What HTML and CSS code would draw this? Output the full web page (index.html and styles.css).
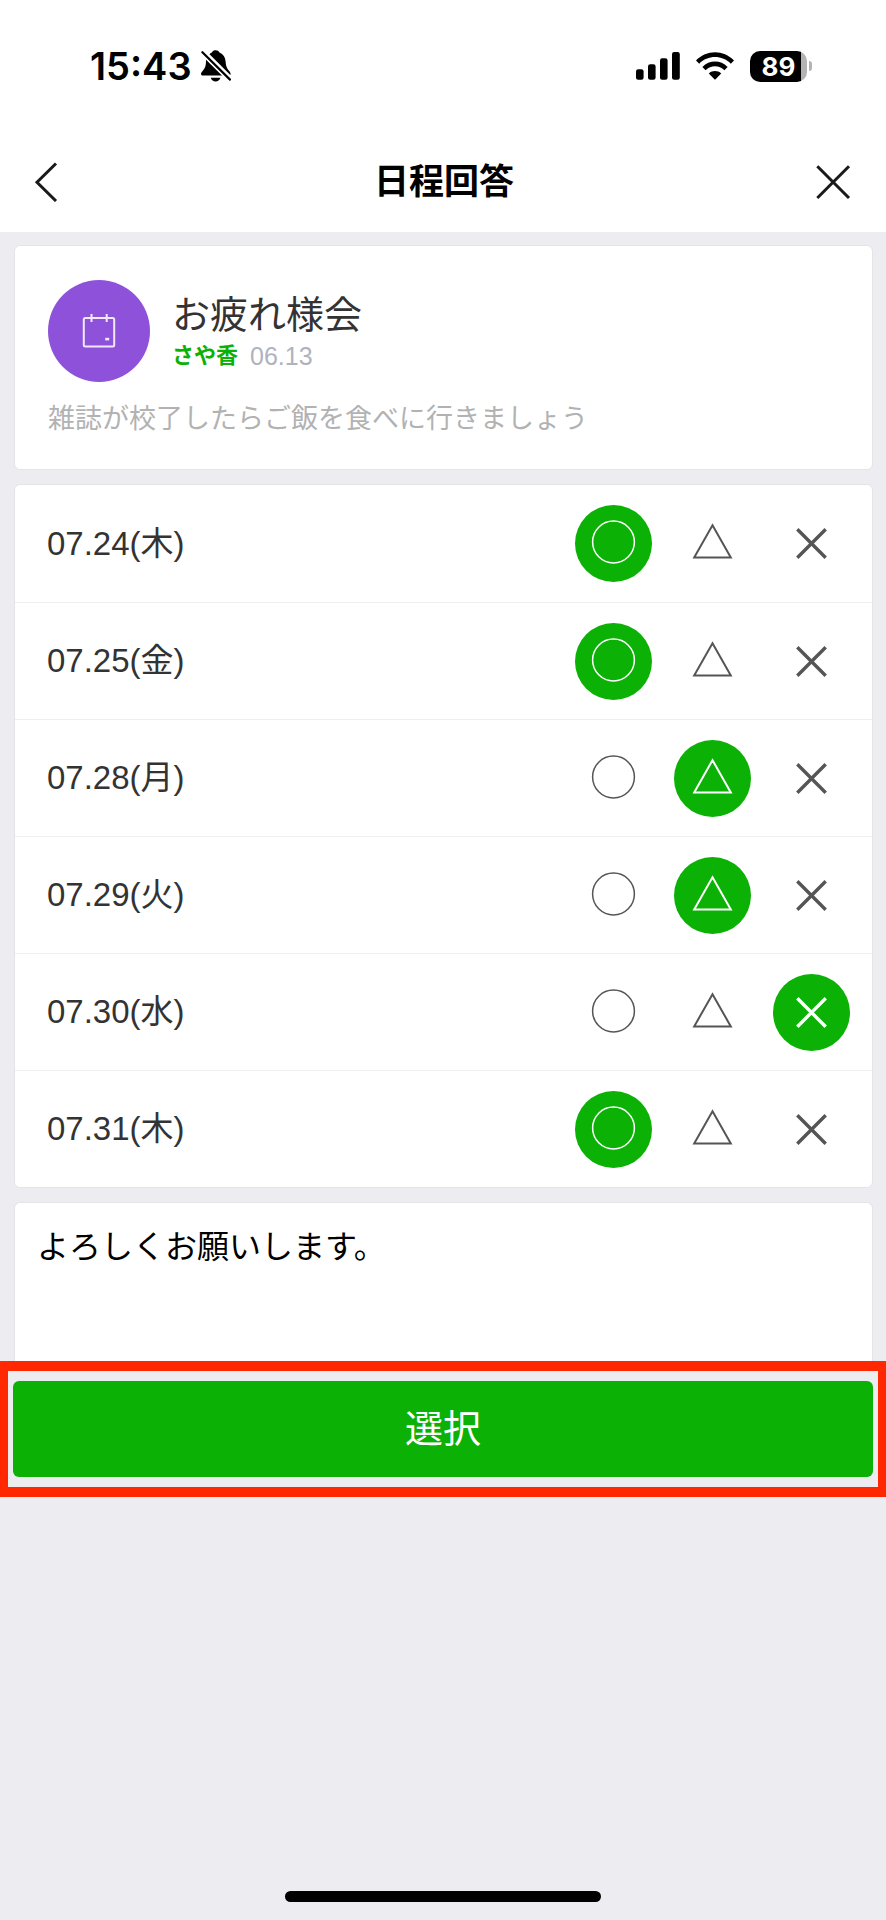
FILE: index.html
```html
<!doctype html>
<html lang="ja">
    <head>
        <meta charset="UTF-8" />
        <meta name="viewport" content="width=device-width, initial-scale=1.0" />
        <title>日程回答</title>
        <link rel="stylesheet" href="styles.css">
    </head>
    <body>
        <svg class="sprite" aria-hidden="true">
            <symbol id="maru" viewBox="0 0 77 77">
                <circle cx="38.5" cy="37" r="20.9" fill="none" stroke="currentColor" stroke-width="1.5" />
            </symbol>
            <symbol id="sankaku" viewBox="0 0 77 77">
                <path d="M38.5 20.2 L56.8 52.4 H20.2 Z" fill="none" stroke="currentColor" stroke-width="2" />
            </symbol>
            <symbol id="batsu" viewBox="0 0 77 77">
                <path d="M24.3 24.3 L52.7 52.7 M52.7 24.3 L24.3 52.7" stroke="currentColor" stroke-width="3.4" />
            </symbol>
        </svg>

        <div class="status-bar">
            <div class="status-left">
                <span class="clock">15:43</span>
                <svg width="30" height="32" viewBox="0 0 30 32">
                    <path d="M8.5 4.2 C9.5 3.3 10.2 3 10.9 2.6 C11.6 .9 13 .3 14.7 .3 C16.4 .3 17.7 1 18.5 2.6 C22.3 4.2 24.3 7.4 24.6 11.5 C24.8 15 25.3 17 26.8 19.2 C28 20.8 29.6 22.2 29.6 24 C29.6 24.4 29.5 24.7 29.3 25 Z" />
                    <path d="M5.3 7.3 L22.6 25.4 H1.8 C.6 25.4 0 24.7 0 23.9 C0 22.5 1.2 21.4 2.2 20.2 C4.4 17.6 4.9 15.2 5 11.3 C5 9.8 5 8.5 5.3 7.3 Z" />
                    <path d="M9.8 27.8 H19.4 C18.6 30.3 16.8 31.6 14.6 31.6 C12.4 31.6 10.5 30.3 9.8 27.8 Z" />
                    <path d="M1.4 2.2 L29 29.6" stroke="#fff" stroke-width="5.6" />
                    <path d="M1.4 2.2 L29 29.6" stroke="#000" stroke-width="2.2" stroke-linecap="round" />
                </svg>
            </div>
            <div class="status-right">
                <svg width="44" height="28" viewBox="0 0 44 28">
                    <rect x="0" y="17.2" width="7.6" height="10.6" rx="2.2" />
                    <rect x="12" y="12.2" width="7.6" height="15.6" rx="2.2" />
                    <rect x="24" y="6.2" width="7.6" height="21.6" rx="2.2" />
                    <rect x="36" y="0" width="7.8" height="27.8" rx="2.2" />
                </svg>
                <svg width="38" height="28" viewBox="0 0 38 28">
                    <path d="M0 8.4 C10.5 -2.6 27.5 -2.6 38 8.4 L34.8 11.7 C26.2 2.8 11.8 2.8 3.2 11.7 Z" />
                    <path d="M6.4 15 C13.4 7.7 24.6 7.7 31.6 15 L28.4 18.2 C23.2 13 14.8 13 9.6 18.2 Z" />
                    <path d="M12.8 21.4 C16.3 18.2 21.7 18.2 25.2 21.4 L19.6 27.2 Q19 27.8 18.4 27.2 Z" />
                </svg>
                <div class="battery"><span class="battery-level">89</span></div>
            </div>
        </div>

        <header class="nav">
            <button type="button" class="nav-btn" aria-label="戻る">
                <svg width="40" height="40" viewBox="0 0 40 40">
                    <path d="M23 1.5 L4 20.3 L23 39" />
                </svg>
            </button>
            <h1>日程回答</h1>
            <button type="button" class="nav-btn" aria-label="閉じる">
                <svg width="36" height="36" viewBox="0 0 36 36">
                    <path d="M2.3 2.3 L34 34 M34 2.3 L2.3 34" />
                </svg>
            </button>
        </header>

        <form class="answer-form">
            <main>
                <section class="card event">
                    <div class="event-head">
                        <div class="event-icon">
                            <svg width="34" height="34" viewBox="0 0 34 34">
                                <rect x="1.8" y="4" width="30.4" height="28.4" rx="1.5" />
                                <path d="M9.5 0 V8 M24.7 0 V8" />
                                <rect x="24.2" y="24.8" width="2" height=".6" />
                            </svg>
                        </div>
                        <div>
                            <h2>お疲れ様会</h2>
                            <p class="meta"><b>さや香</b><time>06.13</time></p>
                        </div>
                    </div>
                    <p class="description">雑誌が校了したらご飯を食べに行きましょう</p>
                </section>

                <section class="card dates">
                    <div class="date-row" role="radiogroup" aria-labelledby="d0724">
                        <span id="d0724">07.24(木)</span>
                        <div class="choices">
                            <label><input type="radio" name="d0724" aria-label="参加" checked><svg><use href="#maru" /></svg></label>
                            <label><input type="radio" name="d0724" aria-label="未定"><svg><use href="#sankaku" /></svg></label>
                            <label><input type="radio" name="d0724" aria-label="不参加"><svg><use href="#batsu" /></svg></label>
                        </div>
                    </div>
                    <div class="date-row" role="radiogroup" aria-labelledby="d0725">
                        <span id="d0725">07.25(金)</span>
                        <div class="choices">
                            <label><input type="radio" name="d0725" aria-label="参加" checked><svg><use href="#maru" /></svg></label>
                            <label><input type="radio" name="d0725" aria-label="未定"><svg><use href="#sankaku" /></svg></label>
                            <label><input type="radio" name="d0725" aria-label="不参加"><svg><use href="#batsu" /></svg></label>
                        </div>
                    </div>
                    <div class="date-row" role="radiogroup" aria-labelledby="d0728">
                        <span id="d0728">07.28(月)</span>
                        <div class="choices">
                            <label><input type="radio" name="d0728" aria-label="参加"><svg><use href="#maru" /></svg></label>
                            <label><input type="radio" name="d0728" aria-label="未定" checked><svg><use href="#sankaku" /></svg></label>
                            <label><input type="radio" name="d0728" aria-label="不参加"><svg><use href="#batsu" /></svg></label>
                        </div>
                    </div>
                    <div class="date-row" role="radiogroup" aria-labelledby="d0729">
                        <span id="d0729">07.29(火)</span>
                        <div class="choices">
                            <label><input type="radio" name="d0729" aria-label="参加"><svg><use href="#maru" /></svg></label>
                            <label><input type="radio" name="d0729" aria-label="未定" checked><svg><use href="#sankaku" /></svg></label>
                            <label><input type="radio" name="d0729" aria-label="不参加"><svg><use href="#batsu" /></svg></label>
                        </div>
                    </div>
                    <div class="date-row" role="radiogroup" aria-labelledby="d0730">
                        <span id="d0730">07.30(水)</span>
                        <div class="choices">
                            <label><input type="radio" name="d0730" aria-label="参加"><svg><use href="#maru" /></svg></label>
                            <label><input type="radio" name="d0730" aria-label="未定"><svg><use href="#sankaku" /></svg></label>
                            <label><input type="radio" name="d0730" aria-label="不参加" checked><svg><use href="#batsu" /></svg></label>
                        </div>
                    </div>
                    <div class="date-row" role="radiogroup" aria-labelledby="d0731">
                        <span id="d0731">07.31(木)</span>
                        <div class="choices">
                            <label><input type="radio" name="d0731" aria-label="参加" checked><svg><use href="#maru" /></svg></label>
                            <label><input type="radio" name="d0731" aria-label="未定"><svg><use href="#sankaku" /></svg></label>
                            <label><input type="radio" name="d0731" aria-label="不参加"><svg><use href="#batsu" /></svg></label>
                        </div>
                    </div>
                </section>

                <textarea class="card message" rows="3" aria-label="コメント">よろしくお願いします。</textarea>
            </main>

            <div class="submit-bar">
                <button type="submit">選択</button>
            </div>
        </form>

        <div class="home-indicator"></div>
    </body>
</html>
```

FILE: styles.css
```css
* {
    box-sizing: border-box;
}

body {
    display: flex;
    flex-direction: column;
    min-height: 100vh;
    margin: 0;
    background: #edecf1;
    color: #333;
    font-family: 'Liberation Sans', 'Noto Sans CJK JP', sans-serif;
}

h1,
h2,
p {
    margin: 0;
}

button,
textarea {
    font-family: inherit;
}

.sprite {
    position: absolute;
    width: 0;
    height: 0;
}

/* status bar */
.status-bar {
    display: flex;
    align-items: center;
    justify-content: space-between;
    height: 132px;
    padding: 0 74px 0 90px;
    background: #fff;
    color: #000;
    font-family: Inter, sans-serif;
}

.status-left {
    display: flex;
    align-items: center;
    gap: 9px;
}

.clock {
    font-size: 38px;
    font-weight: 600;
}

.status-right {
    display: flex;
    align-items: center;
    gap: 16px;
}

.battery {
    display: flex;
    align-items: center;
    gap: 2px;
}

.battery-level {
    width: 57px;
    border-radius: 10px;
    background: linear-gradient(to right, #000 51px, #b3b3b3 51px);
    color: #fff;
    font-size: 26px;
    font-weight: 700;
    line-height: 31px;
    text-align: center;
}

.battery::after {
    content: '';
    width: 3px;
    height: 10px;
    border-radius: 0 3px 3px 0;
    background: #b3b3b3;
}

/* navigation */
.nav {
    display: flex;
    align-items: center;
    justify-content: space-between;
    height: 100px;
    padding: 0 35px 0 33px;
    background: #fff;
}

.nav h1 {
    color: #000;
    font-size: 35px;
    font-weight: 700;
    line-height: 50px;
}

.nav-btn {
    display: flex;
    padding: 0;
    border: 0;
    background: none;
}

.nav-btn svg {
    fill: none;
    stroke: #1a1a1a;
    stroke-width: 3;
}

/* cards */
main {
    display: flex;
    flex-direction: column;
    gap: 14px;
    padding: 13px 13px 0 14px;
}

.card {
    border: 1px solid #e4e4e7;
    border-radius: 6px;
    background: #fff;
}

.event {
    padding: 34px 33px 30px;
}

.event-head {
    display: flex;
    align-items: center;
    gap: 22px;
}

.event-icon {
    display: flex;
    align-items: center;
    justify-content: center;
    width: 102px;
    height: 102px;
    border-radius: 50%;
    background: #8e52da;
}

.event-icon svg {
    fill: none;
    stroke: #f1e9fb;
    stroke-width: 2;
}

.event h2 {
    font-size: 38px;
    font-weight: 400;
    line-height: 50px;
}

.meta {
    display: flex;
    align-items: center;
    gap: 12px;
    line-height: 32px;
}

.meta b {
    color: #0cb106;
    font-size: 22px;
}

.meta time {
    color: #aeb3bf;
    font-size: 25px;
}

.description {
    margin-top: 17px;
    color: #b2b2b2;
    font-size: 27px;
    line-height: 40px;
}

.date-row {
    display: flex;
    align-items: center;
    justify-content: space-between;
    height: 117px;
    padding: 0 22px 0 32px;
    font-size: 33px;
    line-height: 40px;
}

.date-row + .date-row {
    border-top: 1px solid #efefef;
}

.choices {
    display: flex;
    gap: 22px;
}

.choices label {
    display: grid;
    color: #555;
}

.choices input,
.choices svg {
    grid-area: 1 / 1;
    width: 77px;
    height: 77px;
    margin: 0;
}

.choices input {
    appearance: none;
    border-radius: 50%;
}

.choices svg {
    z-index: 1;
    pointer-events: none;
}

.choices input:checked {
    background: #0cb106;
}

.choices input:checked + svg {
    color: #fff;
}

.message {
    display: block;
    width: 100%;
    padding: 24px 22px 14px;
    border-bottom: 0;
    border-radius: 6px 6px 0 0;
    color: #000;
    font-size: 32px;
    line-height: 40px;
    resize: none;
}

/* submit */
.submit-bar {
    padding: 10px 5px;
    border: 10px solid #ff2800;
    border-width: 10px 8px;
}

.submit-bar button {
    display: block;
    width: 100%;
    padding: 22px 0;
    border: 0;
    border-radius: 6px;
    background: #0cb106;
    color: #fff;
    font-size: 38px;
    line-height: 52px;
}

.home-indicator {
    width: 316px;
    height: 11px;
    margin: auto auto 18px;
    border-radius: 6px;
    background: #000;
}
```
